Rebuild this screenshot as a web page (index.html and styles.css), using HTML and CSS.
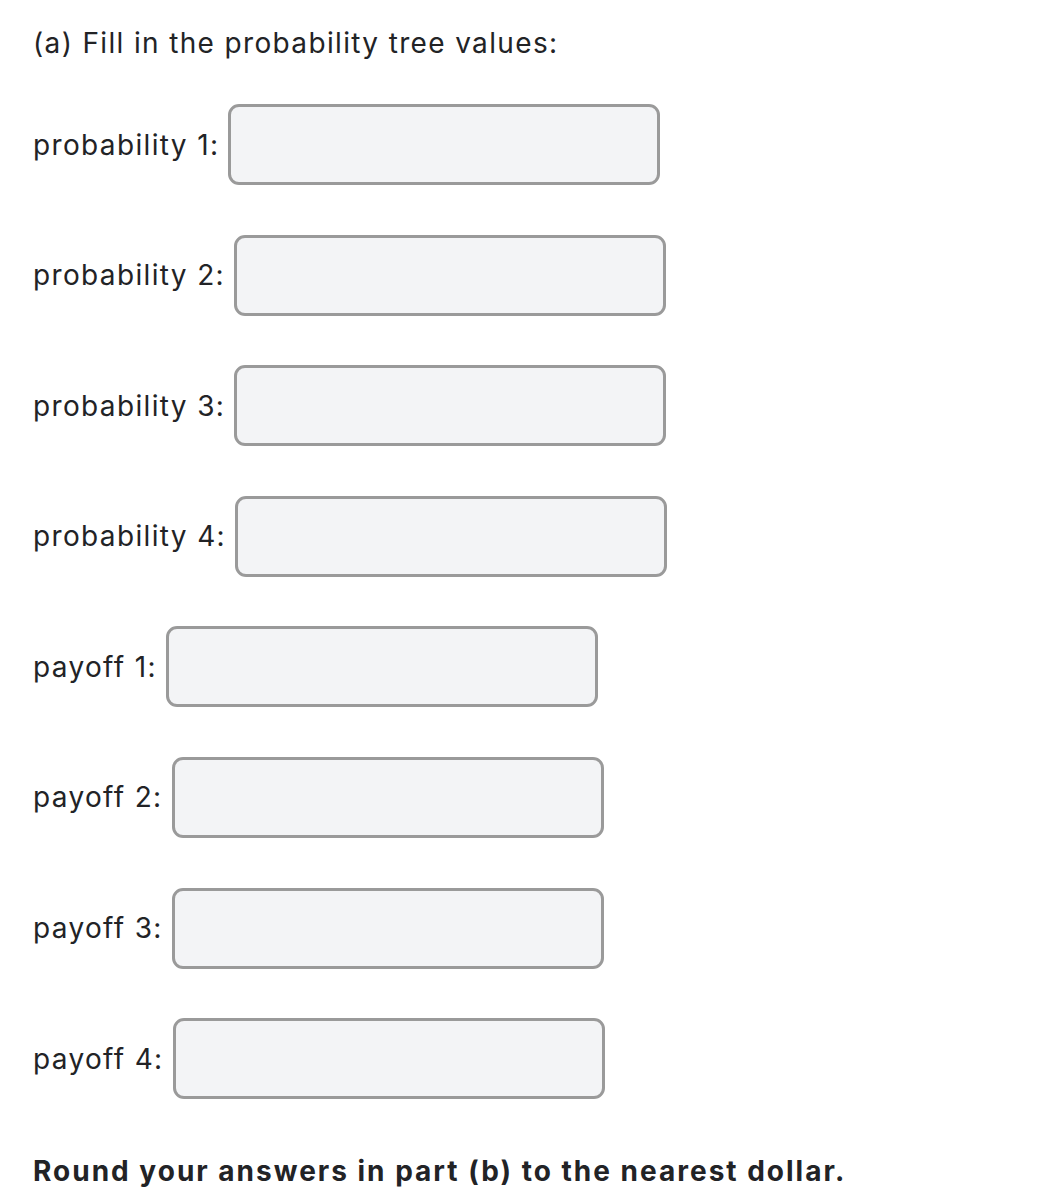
FILE: index.html
```html
<!DOCTYPE html>
<html>
<head>
<meta charset="utf-8">
<link rel="stylesheet" href="styles.css">
</head>
<body>
<div class="page">
  <p class="heading">(a) Fill in the probability tree values:</p>
  <div class="rows">
    <div class="row"><span class="label">probability 1:</span><span class="field"></span></div>
    <div class="row"><span class="label">probability 2:</span><span class="field"></span></div>
    <div class="row"><span class="label">probability 3:</span><span class="field"></span></div>
    <div class="row"><span class="label">probability 4:</span><span class="field"></span></div>
    <div class="row"><span class="label">payoff 1:</span><span class="field"></span></div>
    <div class="row"><span class="label">payoff 2:</span><span class="field"></span></div>
    <div class="row"><span class="label">payoff 3:</span><span class="field"></span></div>
    <div class="row"><span class="label">payoff 4:</span><span class="field"></span></div>
  </div>
  <p class="note">Round your answers in part (b) to the nearest dollar.</p>
</div>
</body>
</html>
```
FILE: styles.css
```css
html, body {
  margin: 0;
  padding: 0;
  background: #ffffff;
}
.page {
  padding: 25px 0 0 33px;
  font-family: "Inter", "Liberation Sans", sans-serif;
  font-size: 28px;
  letter-spacing: 1.35px;
  color: #222326;
}
.heading {
  margin: 0;
  line-height: 36px;
}
.rows {
  display: flex;
  flex-direction: column;
  gap: 49.6px;
  margin-top: 43px;
}
.row {
  display: flex;
  align-items: center;
  gap: 9px;
}
.label {
  line-height: 36px;
}
.field {
  display: block;
  width: 426px;
  height: 75px;
  border: 3px solid #9a9a9a;
  border-radius: 11px;
  background: #f3f4f6;
}
.note {
  margin: 54px 0 0 0;
  line-height: 36px;
  font-weight: 700;
  letter-spacing: 2px;
}
```
